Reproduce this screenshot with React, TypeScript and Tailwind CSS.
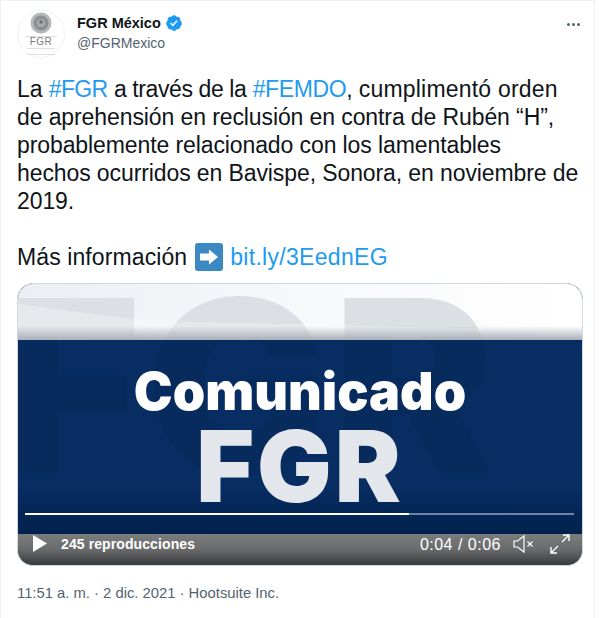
const Avatar = () => (
  <div className="flex h-12 w-12 shrink-0 flex-col items-center rounded-full border border-[#eff3f4] bg-white pt-[1px]">
    <svg width="22" height="22" viewBox="0 0 22 22">
      <circle cx="11" cy="11" r="10.5" fill="#b4b7b9" />
      <circle cx="11" cy="11" r="7.5" fill="#8b8f92" />
      <circle cx="11" cy="11" r="4" fill="#a7abad" />
      <circle cx="11" cy="10" r="1.8" fill="#6b6f72" />
    </svg>
    <div className="mt-[2px] h-px w-8 bg-[#dcdedf]" />
    <span className="mt-[-1px] text-[10px] leading-[12px] font-medium tracking-[0.5px] text-[#777b7e]">FGR</span>
    <div className="h-[7px] w-7 border-y border-[#dcdedf]" />
  </div>
);

const Verified = () => (
  <svg width="18" height="18" viewBox="0 0 24 24" className="ml-[4px]">
    <path
      fill="#1d9bf0"
      d="M22.5 12.5c0-1.58-.875-2.95-2.148-3.6.154-.435.238-.905.238-1.4 0-2.21-1.71-3.998-3.818-3.998-.47 0-.92.084-1.336.25C14.818 2.415 13.51 1.5 12 1.5s-2.816.917-3.437 2.25c-.415-.165-.866-.25-1.336-.25-2.11 0-3.818 1.79-3.818 4 0 .494.083.964.237 1.4-1.272.65-2.147 2.018-2.147 3.6 0 1.495.782 2.798 1.942 3.486-.02.17-.032.34-.032.514 0 2.21 1.708 4 3.818 4 .47 0 .92-.086 1.335-.25.62 1.334 1.926 2.25 3.437 2.25 1.512 0 2.818-.916 3.437-2.25.415.163.865.248 1.336.248 2.11 0 3.818-1.79 3.818-4 0-.174-.012-.344-.033-.513 1.158-.687 1.943-1.99 1.943-3.484z"
    />
    <path
      fill="#fff"
      d="M10.54 16.5 6.8 12.77l1.41-1.42 2.26 2.26 4.8-5.23 1.47 1.36z"
    />
  </svg>
);

const GhostLetters = ({ className }: { className: string }) => (
  <span
    aria-hidden="true"
    className={`absolute left-[-18px] font-black whitespace-nowrap text-[240px] leading-none tracking-[6px] ${className}`}
    style={{ fontFamily: "Inter, sans-serif" }}
  >
    FGR
  </span>
);

const Video = () => (
  <div className="relative mt-[12px] h-[283px] w-[566px] overflow-hidden rounded-2xl border border-[#cfd9de] bg-[#082d62]">
    {/* white band on top of the poster */}
    <div className="absolute inset-x-0 top-0 h-[56px] overflow-hidden bg-gradient-to-r from-[#eceef4] via-[#f7f8fa] to-[#ffffff]">
      <GhostLetters className="top-[-18px] text-[#dcdfe4]" />
      <svg className="absolute inset-0 h-full w-full" viewBox="0 0 564 56" preserveAspectRatio="none">
        <polygon points="0,20 130,37 564,47 564,56 0,56" fill="#ffffff" fillOpacity="0.3" />
      </svg>
      <div className="absolute inset-x-0 bottom-0 h-[14px] bg-gradient-to-b from-transparent to-[#a9afb8]" />
    </div>
    {/* navy panel */}
    <div className="absolute inset-x-0 top-[56px] h-[195px] overflow-hidden bg-gradient-to-b from-[#082d62] from-75% to-[#02214d]">
      <GhostLetters className="top-[-74px] text-[#072b5d]" />
      <div
        className="absolute inset-x-0 top-[22px] text-center text-[52px] leading-[60px] font-black text-white"
        style={{ fontFamily: "Inter, sans-serif" }}
      >
        Comunicado
      </div>
      <div
        className="absolute inset-x-0 top-[71px] text-center text-[99px] leading-[110px] font-black tracking-[3px] text-[#e3e6eb]"
        style={{ fontFamily: "Inter, sans-serif" }}
      >
        FGR
      </div>
    </div>
    {/* progress */}
    <div className="absolute top-[229px] right-[8px] left-[7px] h-[2px] bg-[#6f84a3]">
      <div className="h-full w-[70%] bg-white" />
    </div>
    {/* controls */}
    <div className="absolute inset-x-0 bottom-0 flex h-[31px] items-start bg-gradient-to-b from-[#7b7c7e] via-[#6a6b6c] to-[#37393b] pr-[12px] pl-[15px] text-[14px] text-white">
      <svg width="14" height="17" viewBox="0 0 14 17" className="mt-[1px]">
        <polygon points="0,0 14,8.5 0,17" fill="#fff" />
      </svg>
      <span className="mt-[2px] ml-[14px] leading-[17px] font-bold tracking-[0.1px]">245 reproducciones</span>
      <span className="mt-[2px] ml-auto text-[16px] leading-[17px] tracking-[0.5px]">0:04 / 0:06</span>
      <svg width="22" height="20" viewBox="0 0 22 20" fill="none" stroke="#fff" strokeWidth="1.2" className="ml-[12px]">
        <path d="M1 7h3.5L11 2v16l-6.5-5H1z" />
        <path d="M14.5 7.5l5 5M19.5 7.5l-5 5" />
      </svg>
      <svg width="20" height="20" viewBox="0 0 20 20" fill="none" stroke="#fff" strokeWidth="1.4" className="ml-[15px]">
        <path d="M1 19 8 12M1 13v6h6M19 1l-7 7M13 1h6v6" />
      </svg>
    </div>
  </div>
);

export default function App() {
  return (
    <div
      className="h-[618px] w-[600px] overflow-hidden bg-white text-[#0f1419]"
      style={{ fontFamily: '"Liberation Sans", Arial, sans-serif' }}
    >
      <div className="h-[618px] w-[595px] border-t border-r border-l border-[#eff3f4] pt-[9px] pl-[16px]">
        <div className="flex items-start">
          <Avatar />
          <div className="ml-[12px] flex-1 pt-[3px]">
            <div className="flex items-center text-[14.5px] leading-[20px] font-bold">
              FGR México
              <Verified />
            </div>
            <div className="text-[14px] leading-[20px] text-[#536471]">@FGRMexico</div>
          </div>
          <div className="mt-[13px] mr-[14px] flex gap-[2px]">
            <span className="h-[3px] w-[3px] rounded-full bg-[#536471]" />
            <span className="h-[3px] w-[3px] rounded-full bg-[#536471]" />
            <span className="h-[3px] w-[3px] rounded-full bg-[#536471]" />
          </div>
        </div>
        <p className="mt-[17px] text-[23px] leading-[28px] tracking-[-0.1px] whitespace-nowrap">
          La <span className="tracking-[-0.6px] text-[#1d9bf0]">#FGR</span>{" "}
          <span className="tracking-[-0.4px]">a través de la</span>{" "}
          <span className="tracking-[-0.4px] text-[#1d9bf0]">#FEMDO</span>,{" "}
          <span className="tracking-[0.2px]">cumplimentó orden</span>
          <br />
          de aprehensión en reclusión en contra de Rubén “H”,
          <br />
          probablemente relacionado con los lamentables
          <br />
          hechos ocurridos en Bavispe, Sonora, en noviembre de
          <br />
          2019.
        </p>
        <p className="mt-[28px] flex items-center text-[23px] leading-[28px] tracking-[0.1px]">
          Más información
          <span className="mr-[7px] ml-[8px] flex h-[28px] w-[28px] items-center justify-center rounded-[3px] bg-[#3b88c3]">
            <svg width="20" height="16" viewBox="0 0 20 16">
              <path d="M1 4.5h9V.5l9 7.5-9 7.5v-4H1z" fill="#fff" />
            </svg>
          </span>
          <span className="tracking-[0.3px] text-[#1d9bf0]">bit.ly/3EednEG</span>
        </p>
        <Video />
        <div className="mt-[17px] text-[14.8px] leading-[20px] text-[#536471]">
          11:51 a. m. · 2 dic. 2021 · Hootsuite Inc.
        </div>
      </div>
    </div>
  );
}
